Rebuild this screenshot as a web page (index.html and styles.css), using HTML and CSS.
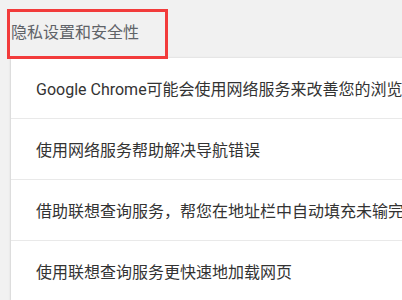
FILE: index.html
```html
<!DOCTYPE html>
<html lang="zh-CN">
<head>
<meta charset="utf-8">
<link rel="stylesheet" href="styles.css">
</head>
<body>
<div class="page">
  <div class="section-head">
    <h2 class="section-title">隐私设置和安全性</h2>
    <div class="highlight"></div>
  </div>
  <div class="card">
    <div class="row">Google Chrome可能会使用网络服务来改善您的浏览体验</div>
    <div class="row">使用网络服务帮助解决导航错误</div>
    <div class="row">借助联想查询服务，帮您在地址栏中自动填充未输完的搜索字词和网址</div>
    <div class="row">使用联想查询服务更快速地加载网页</div>
  </div>
</div>
</body>
</html>
```

FILE: styles.css
```css
html, body {
  margin: 0;
  padding: 0;
  overflow: hidden;
  background: #f1f1f1;
}
.page {
  width: 402px;
  height: 300px;
  overflow: hidden;
  font-family: Roboto, "Noto Sans CJK SC", sans-serif;
}
.section-head {
  position: relative;
  height: 58px;
  display: flex;
  align-items: center;
  padding-left: 11px;
}
.section-title {
  margin: 0;
  font-size: 16px;
  font-weight: normal;
  color: #5f6368;
  white-space: nowrap;
  padding-top: 3px;
}
.highlight {
  position: absolute;
  left: 7px;
  top: 9px;
  width: 155px;
  height: 44px;
  border: 3px solid #f23b3b;
}
.card {
  margin-left: 11px;
  width: 600px;
  background: #fff;
  box-shadow: 0 0 2px rgba(0,0,0,0.12), -1px 1px 2px rgba(0,0,0,0.06);
}
.row {
  height: 60px;
  display: flex;
  align-items: center;
  padding-left: 25px;
  font-size: 16px;
  color: #333;
  white-space: nowrap;
  border-top: 1px solid #e9e9e9;
}
.row:first-child {
  border-top: none;
}
```
